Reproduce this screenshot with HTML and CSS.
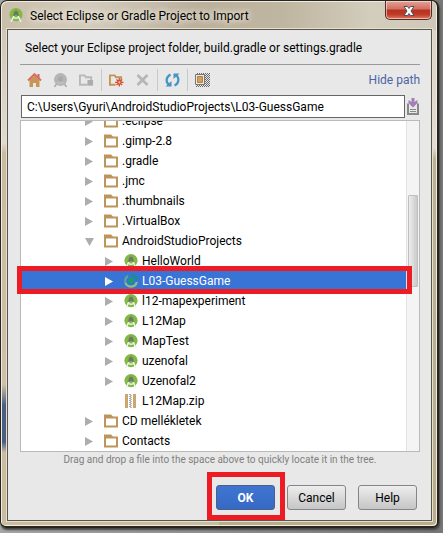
FILE: index.html
```html
<!DOCTYPE html>
<html lang="en">
<head>
<meta charset="utf-8">
<title>Select Eclipse or Gradle Project to Import</title>
<link rel="stylesheet" href="styles.css">
</head>
<body>
<svg class="defs" aria-hidden="true">
  <symbol id="folder" viewBox="0 0 14 13">
    <path fill="#bd9459" fill-rule="evenodd" d="M0 0h7l2 2h5v11H0zM2 4v7h10V4z"/>
  </symbol>
  <symbol id="studio" viewBox="0 0 14 14">
    <circle cx="7" cy="6.6" r="6.6" fill="#82b944"/>
    <path d="M5 8 2 13.800M9 8l3 5.800" stroke="#eef2ea" stroke-width="1.500" fill="none"/>
    <path d="M3.500 9q3.500 2.500 7 0" stroke="#eef2ea" stroke-width="1.300" fill="none"/>
    <path d="M7 1.500v2M5.500 3.500h3l1 4H8.300L7 6 5.700 7.500H4.500z" fill="#6c7568" stroke="#6c7568" stroke-width=".6"/>
  </symbol>
  <symbol id="right" viewBox="0 0 9 9"><path d="M0 0 8 4.500 0 9z" fill="currentColor"/></symbol>
  <symbol id="down" viewBox="0 0 9 9"><path d="M0 1h9L4.500 9z" fill="currentColor"/></symbol>
</svg>
<main class="window">
  <header class="titlebar">
    <svg class="app-icon"><use href="#studio"/></svg>
    <h1>Select Eclipse or Gradle Project to Import</h1>
    <button class="close" aria-label="Close">
      <svg viewBox="0 0 12 10"><path d="M1 .5h3.500L6 2.500 7.500.5H11L8 5l3 4.500H7.500L6 7.500 4.500 9.500H1L4 5z" fill="#fff" stroke="#4e5059"/></svg>
    </button>
  </header>
  <section class="content">
    <p class="prompt">Select your Eclipse project folder, build.gradle or settings.gradle</p>
    <div class="toolbar">
      <button aria-label="Home"><svg viewBox="0 0 14 14"><path d="M10 1h2v4h-2z" fill="#c9695d"/><path d="M2 7l5-5 5 5v7H8.500v-4h-3v4H2z" fill="#c89552"/><path d="M.5 7.500 7 1l6.500 6.500" fill="none" stroke="#d66c66" stroke-width="1.800"/></svg></button>
      <button aria-label="Project directory" disabled><svg viewBox="0 0 14 14"><circle cx="7" cy="6.500" r="6.500" fill="#b5b5b5"/><path d="M4 9.500q3 1.500 6 0" stroke="#c6c6c6" stroke-width="1.200" fill="none"/><circle cx="7" cy="6" r="2.500" fill="#a8a8a8"/><path d="M1 14l2-3M13 14l-2-3" stroke="#aaa" stroke-width="1.500"/></svg></button>
      <button aria-label="Module directory" disabled><svg viewBox="0 0 16 14"><path d="M9 12H1V2h5l1.500 2H13v3" fill="none" stroke="#b8b8b8" stroke-width="2"/><path d="M9 7h6v6H9z" fill="#acacac"/></svg></button>
      <span class="divider"></span>
      <button aria-label="New folder"><svg viewBox="0 0 16 14"><path d="M7 12H1V2h5l1.500 2H13v3" fill="none" stroke="#c39455" stroke-width="2"/><path d="M11 5v9M6.500 9.500h9M8 6.500l6 6M14 6.500l-6 6" stroke="#d34c38" stroke-width="1.400"/><circle cx="11" cy="9.500" r="2.500" fill="#d34c38"/><circle cx="11" cy="9.500" r="1.200" fill="#f5d07b"/></svg></button>
      <button aria-label="Delete" disabled><svg viewBox="0 0 14 14"><path d="m2 2 10 10M12 2 2 12" stroke="#b6b6b6" stroke-width="2.600"/></svg></button>
      <span class="divider"></span>
      <button aria-label="Refresh"><svg viewBox="0 0 14 14"><path d="M5 1.500C0 4 0 10 4 12M9 12.500c5-2.500 5-8.500 1-10.500" fill="none" stroke="#4694c2" stroke-width="2.200"/><path d="M0 13.500h6V8zM14 .5H8V6z" fill="#4694c2"/></svg></button>
      <span class="divider"></span>
      <button aria-label="Show hidden files"><svg viewBox="0 0 15 14"><defs><pattern id="dots" width="2" height="2" patternUnits="userSpaceOnUse"><path d="M0 0h1v1H0zM1 1h1v1H1z" fill="#6c6c6c"/></pattern></defs><path d="M1 0h14v14H1z" fill="url(#dots)"/><path d="M.5 1.500h9v10h-9z" fill="#e8e8e8" stroke="#777"/><path d="M2.500 3.500h5v6h-5z" fill="#d3a15e" stroke="#ba803c"/></svg></button>
      <a class="hide-path" href="#path">Hide path</a>
    </div>
    <div class="path-row">
      <input id="path" type="text" aria-label="Path" value="C:\Users\Gyuri\AndroidStudioProjects\L03-GuessGame">
      <button class="history" aria-label="Path history"><svg viewBox="0 0 12 17"><path d="M2 6.500H1V16h10V6.500h-1" fill="none" stroke="#888" stroke-width="2"/><path d="M3 11.500h6M3 13.500h6" stroke="#888"/><path d="M4.500 0h3v4l3-2v3L6 9.500 1.500 5V2l3 2z" fill="#a27fb8"/></svg></button>
    </div>
    <div class="tree-wrap">
      <div class="tree">
        <ul class="rows">
          <li><svg class="arrow"><use href="#right"/></svg><svg class="icon"><use href="#folder"/></svg>.eclipse</li>
          <li><svg class="arrow"><use href="#right"/></svg><svg class="icon"><use href="#folder"/></svg>.gimp-2.8</li>
          <li><svg class="arrow"><use href="#right"/></svg><svg class="icon"><use href="#folder"/></svg>.gradle</li>
          <li><svg class="arrow"><use href="#right"/></svg><svg class="icon"><use href="#folder"/></svg>.jmc</li>
          <li><svg class="arrow"><use href="#right"/></svg><svg class="icon"><use href="#folder"/></svg>.thumbnails</li>
          <li><svg class="arrow"><use href="#right"/></svg><svg class="icon"><use href="#folder"/></svg>.VirtualBox</li>
          <li><svg class="arrow"><use href="#down"/></svg><svg class="icon"><use href="#folder"/></svg>AndroidStudioProjects</li>
          <li class="child"><svg class="arrow"><use href="#right"/></svg><svg class="icon"><use href="#studio"/></svg>HelloWorld</li>
          <li class="child selected"><svg class="arrow"><use href="#right"/></svg><svg class="icon" viewBox="0 0 14 14"><path d="M4 1.800A6 6 0 0 0 1.300 8" fill="none" stroke="#5fa98f" stroke-width="2"/><path d="M1.300 8.500A6 6 0 0 0 12.800 8" fill="none" stroke="#93c07a" stroke-width="2.200"/><path d="M7 1a6 6 0 0 1 6 5" fill="none" stroke="#16946f" stroke-width="2"/><circle cx="7" cy="6.500" r="2.800" fill="#10a268"/></svg>L03-GuessGame</li>
          <li class="child"><svg class="arrow"><use href="#right"/></svg><svg class="icon"><use href="#studio"/></svg>l12-mapexperiment</li>
          <li class="child"><svg class="arrow"><use href="#right"/></svg><svg class="icon"><use href="#studio"/></svg>L12Map</li>
          <li class="child"><svg class="arrow"><use href="#right"/></svg><svg class="icon"><use href="#studio"/></svg>MapTest</li>
          <li class="child"><svg class="arrow"><use href="#right"/></svg><svg class="icon"><use href="#studio"/></svg>uzenofal</li>
          <li class="child"><svg class="arrow"><use href="#right"/></svg><svg class="icon"><use href="#studio"/></svg>Uzenofal2</li>
          <li class="child"><svg class="arrow"></svg><svg class="icon" viewBox="0 0 14 14"><path d="M1 0h3v14H1zM9 0h3v14H9z" fill="#cda66b"/><path d="M6 0v14" stroke="#555" stroke-dasharray="1 1"/><path d="M7 1v13" stroke="#777" stroke-dasharray="1 1"/></svg>L12Map.zip</li>
          <li><svg class="arrow"><use href="#right"/></svg><svg class="icon"><use href="#folder"/></svg>CD mellékletek</li>
          <li><svg class="arrow"><use href="#right"/></svg><svg class="icon"><use href="#folder"/></svg>Contacts</li>
        </ul>
        <div class="track"><div class="thumb"></div></div>
      </div>
      <span class="mark mark-row"></span>
    </div>
    <p class="hint">Drag and drop a file into the space above to quickly locate it in the tree.</p>
    <footer class="actions">
      <span class="marked"><button class="btn primary">OK</button><span class="mark mark-ok"></span></span>
      <button class="btn">Cancel</button>
      <button class="btn">Help</button>
    </footer>
  </section>
</main>
</body>
</html>
```
FILE: styles.css
```css
* { box-sizing: border-box; }

body {
  margin: 0;
  height: 100vh;
  min-height: 520px;
  padding: 0 4px 5px 0;
  display: flex;
  background: linear-gradient(90deg, #a5a5a5, #777);
  font: 12px/20px Roboto, "Open Sans", sans-serif;
  color: #000;
}

button, input { font: inherit; color: inherit; }
h1, p, ul { margin: 0; padding: 0; font: inherit; }
.defs { position: absolute; width: 0; height: 0; }

.window {
  flex: 1;
  min-width: 0;
  display: flex;
  flex-direction: column;
  padding: 0 5px 5px 6px;
  border: 1px solid #28251f;
  border-width: 1px 2px 2px 1px;
  border-radius: 7px 7px 6px 6px;
  background:
    linear-gradient(90deg, #c9beaa, #d3ccbd 20%, #bbb09c 45%, #bfb6a1 65%, #d3cdbc 85%, #cfc8b8) top / 100% 29px no-repeat,
    linear-gradient(#cbc2b4, #e1dad0 27%, #c8bb9f 29%, #cdc0a6 73%, #4b5f85 77%, #4b5f85 84%, #cabd9f 86%) left / 50% 100% no-repeat,
    linear-gradient(#d6d2c7, #e1ddd4 28%, #bbb295 30%, #b9ad8d);
  box-shadow: inset 1px 1px #f0ece3, inset -1px -1px #f0ece3, 1px 2px 2px #444;
}

.titlebar {
  display: flex;
  align-items: flex-start;
  height: 28px;
  padding: 0 0 0 2px;
}
.titlebar h1 { flex: 1; margin: 5px 0 0 7px; text-shadow: 0 0 6px #f3eee2, 0 0 6px #f3eee2; }
.app-icon { width: 14px; height: 14px; margin-top: 7px; }
.close {
  width: 47px;
  height: 19px;
  padding: 1px 0 0;
  border: 1px solid #532b28;
  border-top: 0;
  border-radius: 0 0 5px 5px;
  background: linear-gradient(#e5a093, #d07062 45%, #b83020 50%, #bd3c29 75%, #df7a5e);
  box-shadow: inset 0 0 0 1px #ffffff80;
}
.close svg { display: block; width: 12px; height: 10px; margin: 0 auto; }

.content {
  flex: 1;
  display: flex;
  flex-direction: column;
  min-height: 0;
  padding: 0 11px 10px 12px;
  border: 1px solid #5b564b;
  background: #e8e8e8;
  box-shadow: 0 0 0 1px #e6dfcf;
}
.prompt { height: 35px; padding: 8px 5px 0; border-bottom: 1px solid #999; }

.toolbar { display: flex; align-items: center; height: 30px; padding-left: 7px; }
.toolbar button, .history { display: block; padding: 0; border: 0; background: none; }
.toolbar button + button { margin-left: 11px; }
.toolbar svg { display: block; width: 15px; height: 14px; }
.divider { width: 1px; height: 22px; margin: 0 7px; background: #c8c8c8; }
.hide-path { margin-left: auto; color: #4b65a4; text-decoration: none; }

.path-row { display: flex; align-items: center; gap: 1px; padding-left: 1px; }
.path-row input {
  flex: 1;
  min-width: 0;
  height: 23px;
  padding: 0 5px;
  border: 1px solid #666;
  border-radius: 0;
  background: #fff;
}
.history svg { display: block; width: 14px; height: 17px; }

.tree-wrap { position: relative; flex: 1; min-height: 0; display: flex; margin-top: 2px; }
.tree { flex: 1; display: flex; border: 1px solid #bababa; background: #fff; overflow: hidden; }
.rows { flex: 1; margin-top: -10px; list-style: none; }
.rows li { display: flex; align-items: center; height: 20px; padding-left: 64px; white-space: nowrap; }
.rows li.child { padding-left: 84px; }
.rows .selected { background: #3874d6; color: #fff; }
.arrow { width: 9px; height: 9px; margin-right: 10px; color: #adadad; }
.selected .arrow { color: #fff; }
.icon { width: 14px; height: 14px; margin-right: 4px; }
.track { width: 13px; padding: 74px 1px 0; border-left: 1px solid #e3e3e3; background: #f4f4f4; }
.thumb {
  height: 92px;
  border: 1px solid #bfbfbf;
  border-radius: 1px;
  background: linear-gradient(90deg, #ededed, #cacaca);
}

.hint { height: 24px; padding-top: 1px; font-size: 10px; line-height: 14px; color: #808080; text-align: center; }

.actions { display: flex; justify-content: flex-end; gap: 12px; padding: 9px 3px 0 0; }
.marked { position: relative; }
.btn {
  display: block;
  width: 59px;
  height: 25px;
  padding: 0;
  border: 1px solid #858585;
  border-radius: 3px;
  background: linear-gradient(#eee, #c5c5c5);
}
.primary { border-color: #4c5f86; background: linear-gradient(#3f75d0, #3569c5); color: #fff; font-weight: 700; }

.mark { position: absolute; border: 5px solid #ed1c24; pointer-events: none; }
.mark-row { top: 146px; left: -3px; right: 8px; height: 28px; }
.mark-ok { top: -13px; left: -9px; right: -10px; height: 48px; }
```
